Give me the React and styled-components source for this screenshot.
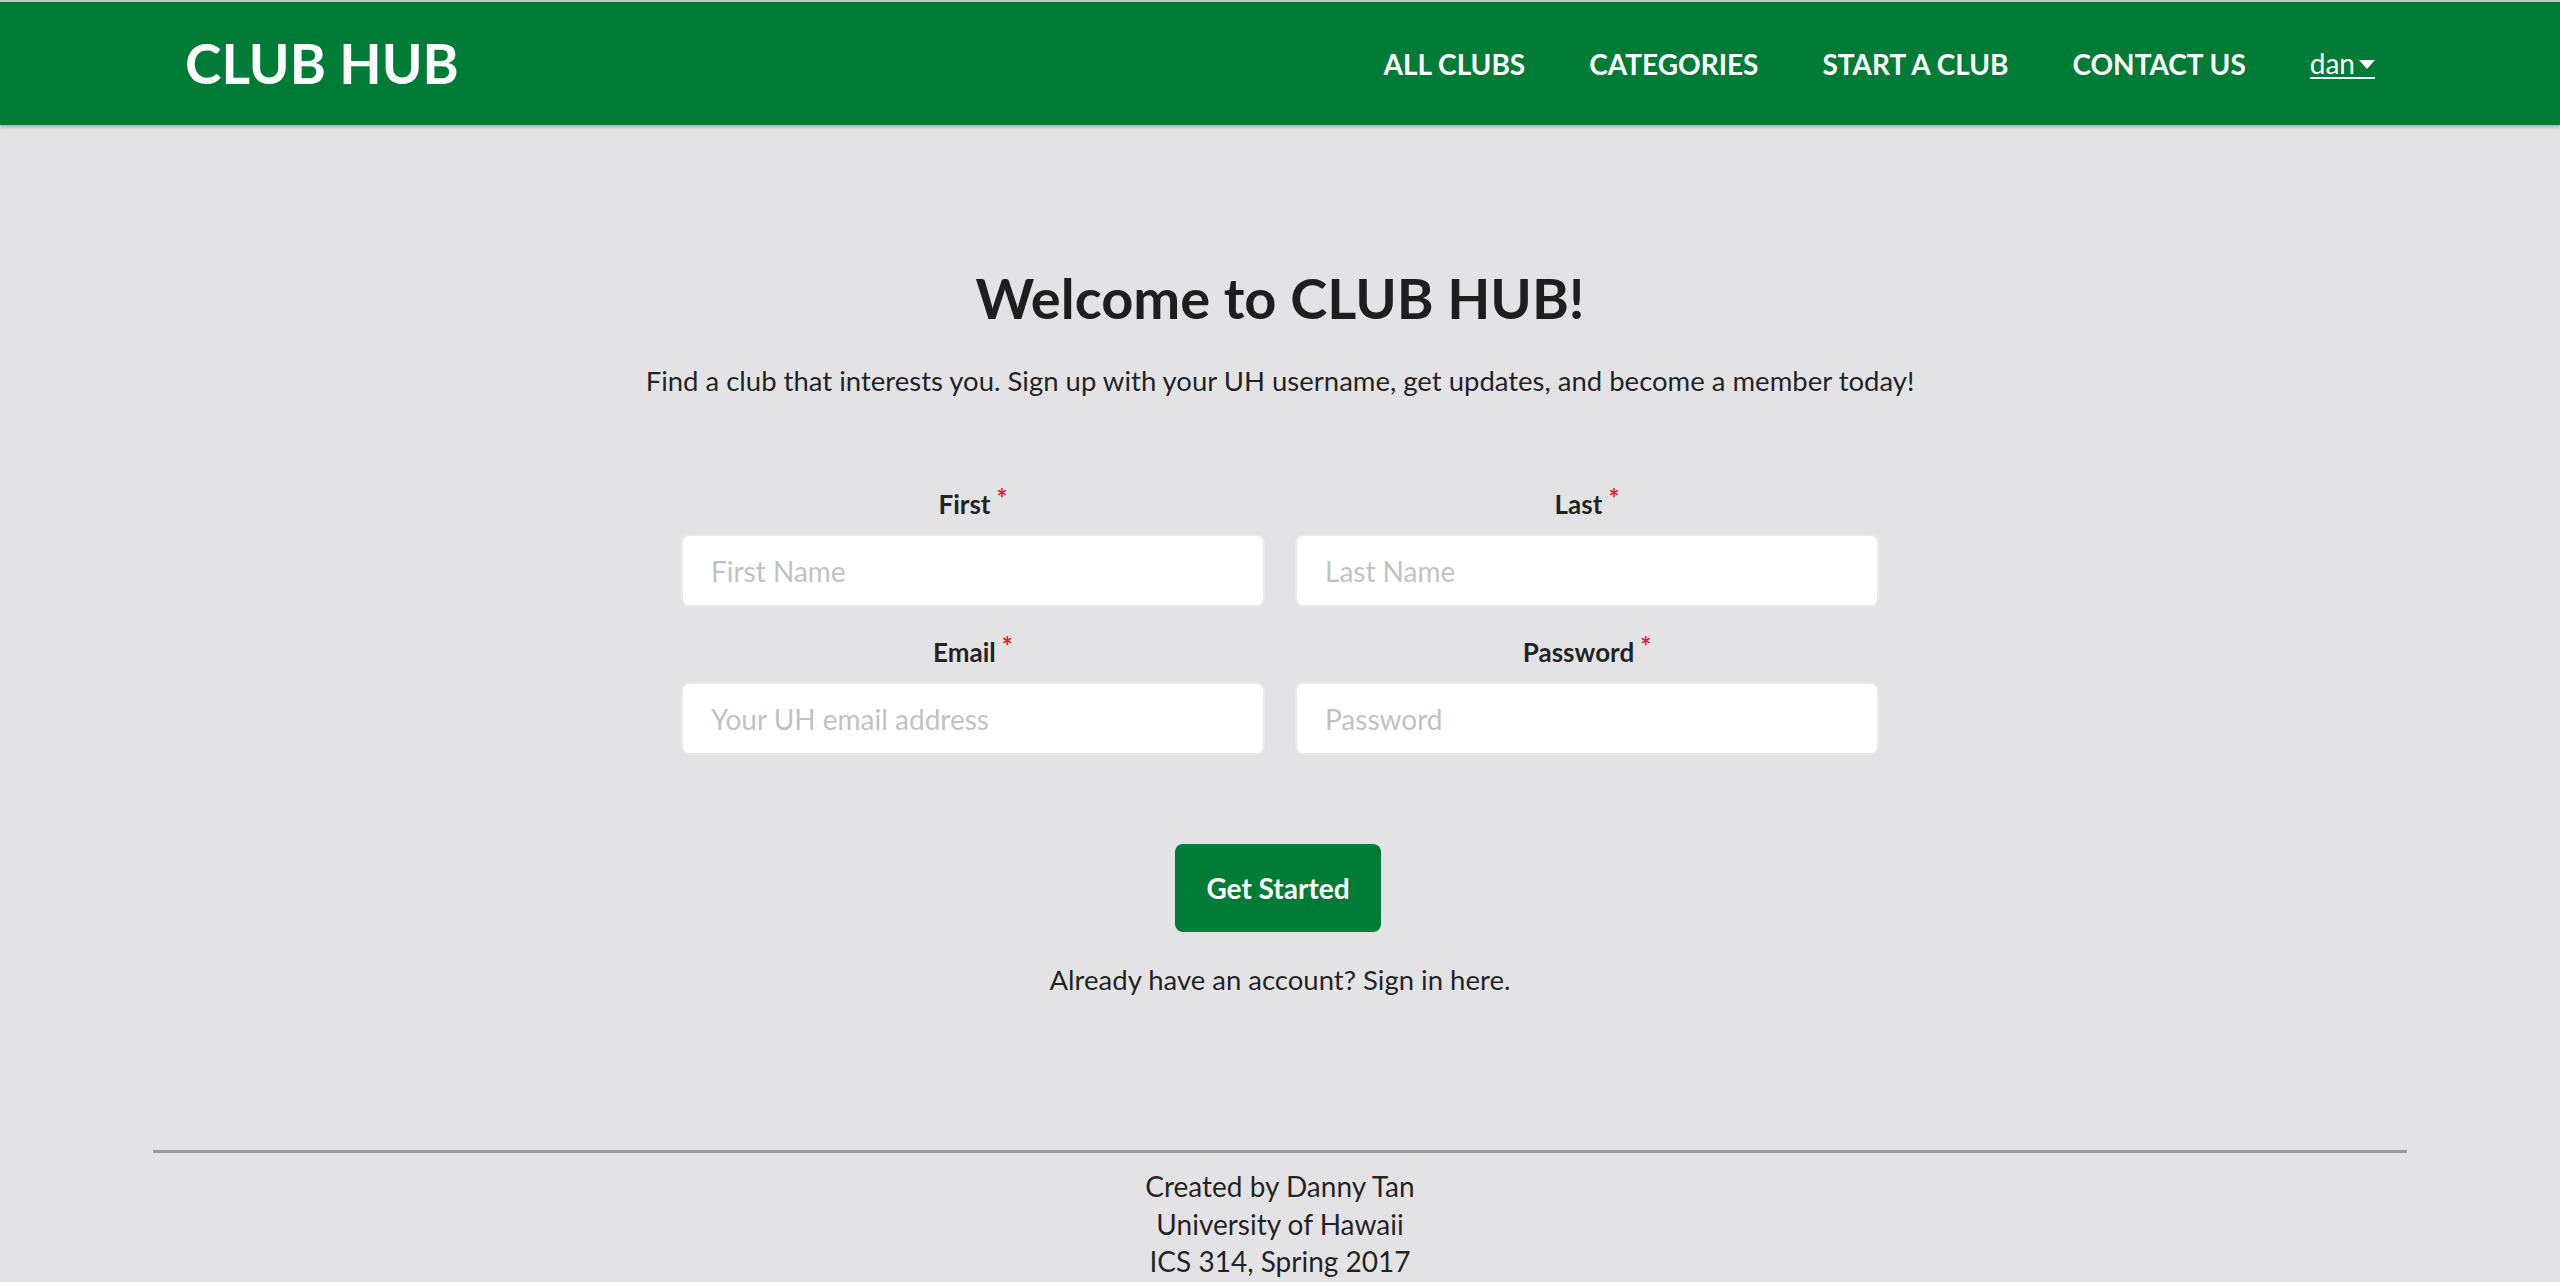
import React from 'react'
import styled, { createGlobalStyle } from 'styled-components';

const GREEN = '#007c37';

const GlobalStyle = createGlobalStyle`
  html, body {
    margin: 0;
    padding: 0;
    background: #e3e3e6;
    font-family: Lato, "Open Sans", "Liberation Sans", sans-serif;
    color: rgba(0,0,0,.87);
  }
  * { box-sizing: border-box; }
`;

const NavBar = styled.header`
  border-top: 2px solid #c4c4c4;
  background: ${GREEN};
  height: 125px;
  box-shadow: 0 2px 3px rgba(0,0,0,.25);
`;

const NavInner = styled.div`
  width: 2254px;
  height: 100%;
  margin: 0 auto;
  display: flex;
  align-items: center;
`;

const Logo = styled.a`
  padding: 0 32px;
  font-size: 55px;
  font-weight: 700;
  color: #fff;
  line-height: 1;
  text-decoration: none;
`;

const Menu = styled.nav`
  margin-left: auto;
  display: flex;
  align-items: center;
`;

const MenuItem = styled.a`
  padding: 0 32px;
  font-size: 28px;
  font-weight: 700;
  color: #fff;
  line-height: 1;
  text-decoration: none;
  white-space: nowrap;
`;

const UserToggle = styled.span`
  display: inline-flex;
  align-items: center;
  gap: 4px;
  border-bottom: 2px solid #fff;
  font-weight: 400;
  svg {
    width: 16px;
    height: 10px;
    margin-top: 4px;
  }
`;

const Main = styled.main`
  display: flex;
  flex-direction: column;
  align-items: center;
  padding-top: 137px;
`;

const Title = styled.h1`
  margin: 0;
  font-size: 56px;
  line-height: 72px;
  font-weight: 700;
`;

const Lead = styled.p`
  margin: 27px 0 0;
  font-size: 27.5px;
  line-height: 40px;
`;

const Form = styled.form`
  width: 1198px;
  margin-top: 85px;
  display: grid;
  grid-template-columns: 1fr 1fr;
  column-gap: 30px;
  row-gap: 27px;
`;

const Field = styled.div`
  display: flex;
  flex-direction: column;
`;

const Label = styled.label`
  display: block;
  text-align: center;
  font-size: 26px;
  line-height: 36px;
  font-weight: 700;
  margin-bottom: 12px;
  &::after {
    content: '*';
    color: #db2828;
    display: inline-block;
    vertical-align: top;
    margin: -6px 0 0 6px;
    font-size: 26px;
  }
`;

const Input = styled.input`
  height: 73px;
  width: 100%;
  padding: 0 28px;
  border: 2px solid rgba(34,36,38,.1);
  border-radius: 8px;
  background: #fff;
  font-family: inherit;
  font-size: 28px;
  color: rgba(0,0,0,.87);
  outline: none;
  &::placeholder {
    color: #c2c2c2;
  }
`;

const Button = styled.button`
  margin-top: 89px;
  margin-right: 4px;
  padding: 30px 31px;
  border: none;
  border-radius: 8px;
  background: ${GREEN};
  color: #fff;
  font-family: inherit;
  font-size: 28px;
  line-height: 28px;
  font-weight: 700;
  cursor: pointer;
`;

const SignIn = styled.p`
  margin: 28px 0 0;
  font-size: 27.5px;
  line-height: 40px;
`;

const Footer = styled.footer`
  width: 2254px;
  margin: 150px auto 0;
  border-top: 3px solid #9b9b9b;
  box-shadow: 0 2px 0 #f2f2f3;
  padding-top: 15px;
  text-align: center;
  font-size: 28px;
  line-height: 37.5px;
`;

const Caret = () => (
  <svg viewBox="0 0 16 10" fill="#fff">
    <path d="M0 0 H16 L8 9 Z" />
  </svg>
);

const fields = [
  { label: 'First', placeholder: 'First Name', type: 'text' },
  { label: 'Last', placeholder: 'Last Name', type: 'text' },
  { label: 'Email', placeholder: 'Your UH email address', type: 'email' },
  { label: 'Password', placeholder: 'Password', type: 'password' },
];

const App = () => {
  return (
    <>
      <GlobalStyle />
      <NavBar>
        <NavInner>
          <Logo href="#">CLUB HUB</Logo>
          <Menu>
            <MenuItem href="#">ALL CLUBS</MenuItem>
            <MenuItem href="#">CATEGORIES</MenuItem>
            <MenuItem href="#">START A CLUB</MenuItem>
            <MenuItem href="#">CONTACT US</MenuItem>
            <MenuItem href="#">
              <UserToggle>dan<Caret /></UserToggle>
            </MenuItem>
          </Menu>
        </NavInner>
      </NavBar>
      <Main>
        <Title>Welcome to CLUB HUB!</Title>
        <Lead>Find a club that interests you. Sign up with your UH username, get updates, and become a member today!</Lead>
        <Form onSubmit={e => e.preventDefault()}>
          {fields.map(f => (
            <Field key={f.label}>
              <Label>{f.label}</Label>
              <Input type={f.type} placeholder={f.placeholder} />
            </Field>
          ))}
        </Form>
        <Button type="button">Get Started</Button>
        <SignIn>Already have an account? Sign in here.</SignIn>
      </Main>
      <Footer>
        <div>Created by Danny Tan</div>
        <div>University of Hawaii</div>
        <div>ICS 314, Spring 2017</div>
      </Footer>
    </>
  )
}

export default App;
